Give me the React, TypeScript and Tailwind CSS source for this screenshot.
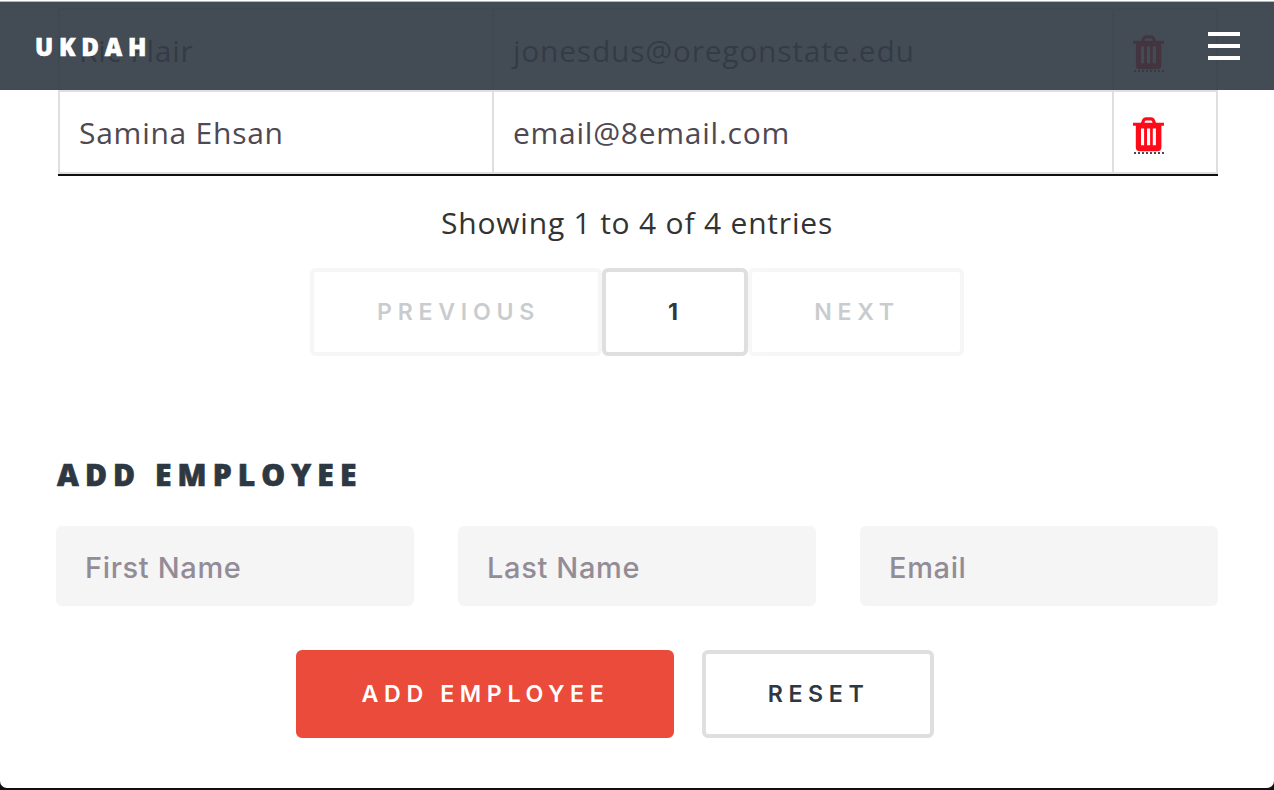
import React from "react";

function TrashIcon() {
  return (
    <svg className="block h-[35px] w-[31px]" viewBox="0 0 31 35" fill="none">
      <path d="M9.2 7.5 L10.4 3.9 Q11.2 1.9 13 1.9 H18 Q19.8 1.9 20.6 3.9 L21.8 7.5" stroke="#ff0a19" strokeWidth="3.2" />
      <path
        d="M0 5.8H31V8.8H28.4V30.2Q28.4 34.2 24.4 34.2H6.8Q2.8 34.2 2.8 30.2V8.8H0ZM8 11.4V28.2H11.1V11.4ZM14 11.4V28.2H17.1V11.4ZM19.8 11.4V28.2H22.9V11.4Z"
        fill="#ff0a19"
        fillRule="evenodd"
      />
    </svg>
  );
}

function DottedRule() {
  return (
    <svg className="ml-px block h-0.5 w-[30px]" viewBox="0 0 30 2">
      <path d="M0 1H30" stroke="#4e4852" strokeWidth="2" strokeDasharray="2 2" />
    </svg>
  );
}

function Row({ name, email }: { name: string; email: string }) {
  return (
    <div className="flex h-[82px] border-t-2 border-l-2 border-[#dfdfdf] text-[30px] leading-[82px] tracking-[0.75px] whitespace-nowrap text-[#4e4852]">
      <div className="w-[434px] border-r-2 border-[#dfdfdf] pl-[19px]">{name}</div>
      <div className="w-[620px] border-r-2 border-[#dfdfdf] pl-[19px]">{email}</div>
      <div className="w-[104px] border-r-2 border-[#dfdfdf] pt-[25px] pl-[19px]">
        <TrashIcon />
        <DottedRule />
      </div>
    </div>
  );
}

const buttonBase =
  "flex h-[88px] items-center justify-center rounded-md border-4 font-[Inter,sans-serif] text-[23.2px] whitespace-nowrap";

export default function App() {
  return (
    <div className="h-[790px] w-[1274px] overflow-hidden bg-[#110f12] font-['Open_Sans',sans-serif]">
      <div className="relative h-[788px] overflow-hidden rounded-b-[7px] bg-white">
        <header className="absolute inset-x-0 top-px z-10 flex h-[89px] items-center justify-between border-t border-[#b5b7b9] bg-[#303a44]/91 pr-[34px] pl-[35px]">
          <span className="pt-[2px] text-[24px] leading-none font-extrabold tracking-[5.8px] text-white [-webkit-text-stroke:0.6px]">UKDAH</span>
          <div className="flex w-8 flex-col gap-2">
            <span className="h-1 bg-white" />
            <span className="h-1 bg-white" />
            <span className="h-1 bg-white" />
          </div>
        </header>

        <main className="px-[56px] pt-[8px]">
          <section className="ml-0.5 border-b-2 border-[#110f12]">
            <div className="border-b-2 border-[#dfdfdf]">
              <Row name="Ric Flair" email="jonesdus@oregonstate.edu" />
              <Row name="Samina Ehsan" email="email@8email.com" />
            </div>
          </section>

          <p className="mt-[26px] text-center text-[30px] leading-[42px] tracking-[0.8px] text-[#333]">
            Showing 1 to 4 of 4 entries
          </p>

          <nav className="mt-[24px] flex justify-center">
            <button className={`${buttonBase} w-[292px] border-[#dfdfdf] pl-[5px] font-semibold tracking-[5.7px] text-[#2e3842] opacity-25`}>PREVIOUS</button>
            <button className={`${buttonBase} w-[146px] border-[#dfdfdf] pl-[2px] font-bold tracking-[6px] text-[#2e3842]`}>1</button>
            <button className={`${buttonBase} w-[216px] border-[#dfdfdf] pl-[2px] font-semibold tracking-[5.7px] text-[#2e3842] opacity-25`}>NEXT</button>
          </nav>

          <h2 className="mt-[97px] pl-px text-[30px] leading-[44px] font-extrabold tracking-[6.1px] text-[#2e3842] [-webkit-text-stroke:0.7px]">ADD EMPLOYEE</h2>

          <form>
            <div className="mt-[29px] grid grid-cols-3 gap-[44px]">
              {["First Name", "Last Name", "Email"].map((label) => (
                <input
                  key={label}
                  placeholder={label}
                  className="h-20 w-full rounded-md bg-[#f5f5f5] pt-[2px] pl-[29px] font-[Inter,sans-serif] text-[29px] font-[450] tracking-[0.65px] placeholder:text-[#938c97]"
                />
              ))}
            </div>
            <div className="mt-[44px] ml-[240px] flex gap-7">
              <button type="button" className={`${buttonBase} w-[378px] border-[#eb4b3b] bg-[#eb4b3b] pl-[1px] font-semibold tracking-[5.6px] text-white`}>ADD EMPLOYEE</button>
              <button type="button" className={`${buttonBase} w-[232px] border-[#dfdfdf] pl-[1px] font-semibold tracking-[5.6px] text-[#2e3842]`}>RESET</button>
            </div>
          </form>
        </main>
      </div>
    </div>
  );
}
